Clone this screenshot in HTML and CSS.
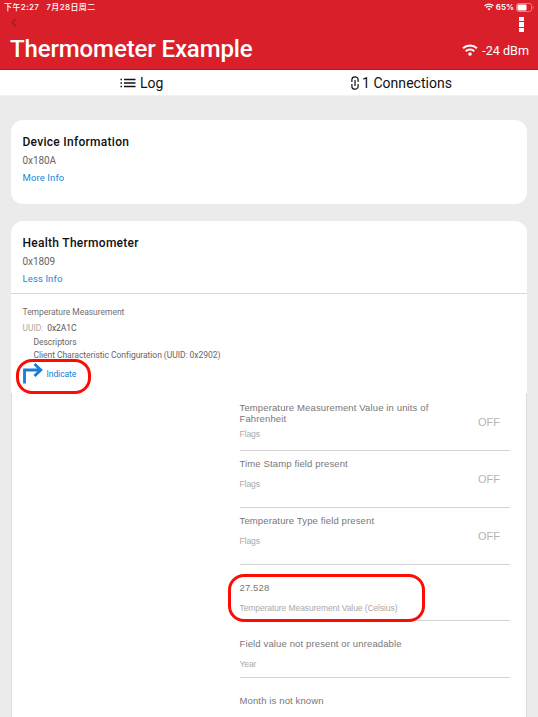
FILE: index.html
```html
<!DOCTYPE html>
<html lang="en">
<head>
<meta charset="utf-8">
<title>Thermometer Example</title>
<link rel="stylesheet" href="styles.css">
</head>
<body>
<header class="header">
  <div class="status">
    <div class="status-left"><span class="clock">下午2:27</span><span class="date">7月28日周二</span></div>
    <div class="status-right">
      <svg class="wifi-small" viewBox="0 0 20 15"><path d="M1 5.2a13 13 0 0 1 18 0M4.2 8.6a8.4 8.4 0 0 1 11.6 0" fill="none" stroke="#fff" stroke-width="2.6"/><path d="M6.8 11.2a4.8 4.8 0 0 1 6.4 0L10 14.6z" fill="#fff"/></svg>
      <span class="percent">65%</span>
      <svg class="battery" viewBox="0 0 18 9"><rect x=".5" y=".5" width="15" height="8" rx="2.2" fill="none" stroke="#ea7c82"/><rect x="1.5" y="1.5" width="9" height="6" rx="1" fill="#fff"/><path d="M16.6 3v3q1-.4 1-1.5t-1-1.5z" fill="#ea7c82"/></svg>
    </div>
  </div>
  <div class="nav">
    <svg class="back" viewBox="0 0 6 9"><path d="M5 .8 1.2 4.5 5 8.2" fill="none" stroke="#9c1820" stroke-width="1.1"/></svg>
    <div class="more"><i></i><i></i><i></i></div>
  </div>
  <div class="title-row">
    <h1>Thermometer Example</h1>
    <svg class="wifi" viewBox="0 0 16 12"><path d="M1 4.3a10.2 10.2 0 0 1 14 0M3.7 7.2a6.2 6.2 0 0 1 8.6 0" fill="none" stroke="#fff" stroke-width="1.9"/><circle cx="8" cy="10" r="1.8" fill="#fff"/></svg>
    <span class="rssi">-24 dBm</span>
  </div>
</header>
<nav class="tabs">
  <div class="tab tab-log">
    <svg class="list" viewBox="0 0 16 10"><path d="M4 1.5h11.5M4 5h11.5M4 8.5h11.5" stroke="#111" stroke-width="1.5"/><path d="M.5 1.5H2M.5 5H2M.5 8.5H2" stroke="#111" stroke-width="1.5"/></svg>
    <span>Log</span>
  </div>
  <div class="tab tab-conn">
    <svg class="link" viewBox="0 0 8 14"><path d="M.9 6V3.6a3.1 2.8 0 0 1 6.2 0V6M.9 8v2.4a3.1 2.8 0 0 0 6.2 0V8M4 4v6" fill="none" stroke="#111" stroke-width="1.2"/></svg>
    <span>1 Connections</span>
  </div>
</nav>
<main>
  <section class="card card-device">
    <h2 class="name-device">Device Information</h2>
    <p class="code">0x180A</p>
    <a class="info">More Info</a>
  </section>
  <section class="card card-health">
    <div class="service">
      <h2 class="name-health">Health Thermometer</h2>
      <p class="code">0x1809</p>
      <a class="info">Less Info</a>
    </div>
    <div class="characteristic">
      <h3>Temperature Measurement</h3>
      <p class="uuid"><span>UUID:</span> <b>0x2A1C</b></p>
      <p class="desc">Descriptors</p>
      <p class="desc config">Client Characteristic Configuration (UUID: 0x2902)</p>
      <div class="indicate">
        <svg class="arrow" viewBox="0 0 20 21"><path d="M1.5 20.5V7H17M11.5 1l6.3 6-6.3 6" fill="none" stroke="#147edb" stroke-width="2.8"/></svg>
        <span>Indicate</span>
        <div class="mark mark-indicate"></div>
      </div>
    </div>
    <div class="fields">
      <div class="field">
        <div><p class="value">Temperature Measurement Value in units of<br>Fahrenheit</p><p class="label label-near">Flags</p></div>
        <span class="off">OFF</span>
      </div>
      <div class="field">
        <div><p class="value">Time Stamp field present</p><p class="label">Flags</p></div>
        <span class="off">OFF</span>
      </div>
      <div class="field">
        <div><p class="value">Temperature Type field present</p><p class="label">Flags</p></div>
        <span class="off">OFF</span>
      </div>
      <div class="field low">
        <div><p class="value">27.528</p><p class="label">Temperature Measurement Value (Celsius)</p></div>
        <div class="mark mark-value"></div>
      </div>
      <div class="field low">
        <div><p class="value">Field value not present or unreadable</p><p class="label">Year</p></div>
      </div>
      <div class="field low">
        <div><p class="value">Month is not known</p></div>
      </div>
    </div>
  </section>
</main>
</body>
</html>
```

FILE: styles.css
```css
* { box-sizing: border-box; margin: 0; padding: 0; }
body { width: 538px; height: 717px; overflow: hidden; background: #ebebeb; font-family: Roboto, "Liberation Sans", sans-serif; color: #111; white-space: nowrap; }
svg { display: block; flex: none; }

.header { height: 70px; background: #d9202a; border-bottom: 1px solid #c90d1c; color: #fff; }
.status { height: 14px; display: flex; justify-content: space-between; padding: 0 4px 0 4px; font: 500 8px/14px Inter, "Noto Sans CJK SC", sans-serif; }
.status-left { display: flex; gap: 7px; letter-spacing: .4px; }
.status-right { display: flex; align-items: center; gap: 2px; }
.wifi-small { width: 10px; height: 8px; }
.percent { font-weight: 600; }
.battery { width: 18px; height: 9px; }
.nav { height: 20px; display: flex; justify-content: space-between; padding: 3px 14px 0 11px; }
.back { width: 6px; height: 9px; margin-top: 1px; }
.more { display: flex; flex-direction: column; gap: 1px; }
.more i { width: 5px; height: 4.3px; background: #fff; }
.title-row { height: 30px; display: flex; align-items: center; padding: 0 9px 0 10px; }
h1 { font-size: 24px; line-height: 30px; font-weight: 500; letter-spacing: -.12px; flex: 1; }
.wifi { width: 16px; height: 12px; margin: 2px 4px 0 0; }
.rssi { font-size: 12.6px; line-height: 30px; padding-top: 4px; }

.tabs { height: 26px; display: grid; grid-template-columns: 1fr 1fr; background: #fff; border-bottom: 1px solid #f2f2f2; }
.tab { display: flex; align-items: center; font-size: 14px; line-height: 25px; }
.tab span { padding-top: 1px; }
.tab-log { padding-left: 120px; gap: 4px; }
.tab-conn { padding-left: 82px; gap: 3px; }
.tab-conn span { letter-spacing: .04px; }
.list { width: 16px; height: 10px; }
.link { width: 8px; height: 14px; }

main { padding: 24px 11px 0; }
.card { background: #fff; border-radius: 12px; }
.card-device { height: 84px; padding: 13px 11.5px 0; margin-bottom: 17px; }
h2 { font-size: 12px; line-height: 18px; font-weight: 500; letter-spacing: .28px; }
.code { margin-top: 4px; font-size: 10px; line-height: 12px; color: #666; letter-spacing: -.1px; }
.info { display: block; margin-top: 5px; font-size: 9.5px; line-height: 12px; color: #1687d9; letter-spacing: .12px; }
.service { height: 73px; padding: 13px 11.5px 0; border-bottom: 1px solid #d7d7d7; }
.card-health { height: 510px; border-radius: 12px 12px 0 0; }
.characteristic { height: 99px; padding: 12px 11.5px 0; }
h3 { font-size: 8.5px; line-height: 12px; font-weight: 400; color: #707070; letter-spacing: -.03px; }
.uuid { margin-top: 4px; font-size: 8.5px; line-height: 12px; color: #aaa; letter-spacing: -.06px; }
.uuid b { font-weight: 400; color: #555; margin-left: 2px; }
.desc { padding-left: 11px; margin-top: 3px; font-size: 8.5px; line-height: 11px; color: #666; letter-spacing: -.04px; }
.config { margin-top: 2px; }
.indicate { position: relative; display: flex; gap: 4px; height: 22px; margin-top: 2px; color: #147edb; font-size: 8.5px; line-height: 22px; letter-spacing: -.06px; }
.arrow { width: 20px; height: 21px; }
.mark { position: absolute; border: 3px solid #fb0d04; }
.mark-indicate { left: -6.5px; top: -4.5px; width: 75px; height: 35px; border-radius: 16px; }

.fields { height: 338px; border: solid #dcdcdc; border-width: 0 1px; padding: 0 16px 0 227.5px; overflow: hidden; font-family: "Liberation Sans", sans-serif; }
.field { position: relative; height: 56.75px; padding: 7px 10px 0 0; border-bottom: 1px solid #d5d5d5; display: flex; justify-content: space-between; color: #777; }
.field:first-child { height: 58px; padding-top: 9px; }
.value { font-size: 9.5px; line-height: 11px; letter-spacing: .13px; }
.label { margin-top: 10px; font-size: 8.5px; line-height: 10px; color: #aaa; letter-spacing: -.09px; }
.label-near { margin-top: 5px; }
.off { font-size: 11px; line-height: 14px; margin-top: 14px; color: #b5b5b5; }
.field:first-child .off { margin-top: 13px; }
.low { padding-top: 17px; }
.mark-value { left: -11.5px; top: 9.5px; width: 197px; height: 48px; border-radius: 16px; z-index: 1; }
```
